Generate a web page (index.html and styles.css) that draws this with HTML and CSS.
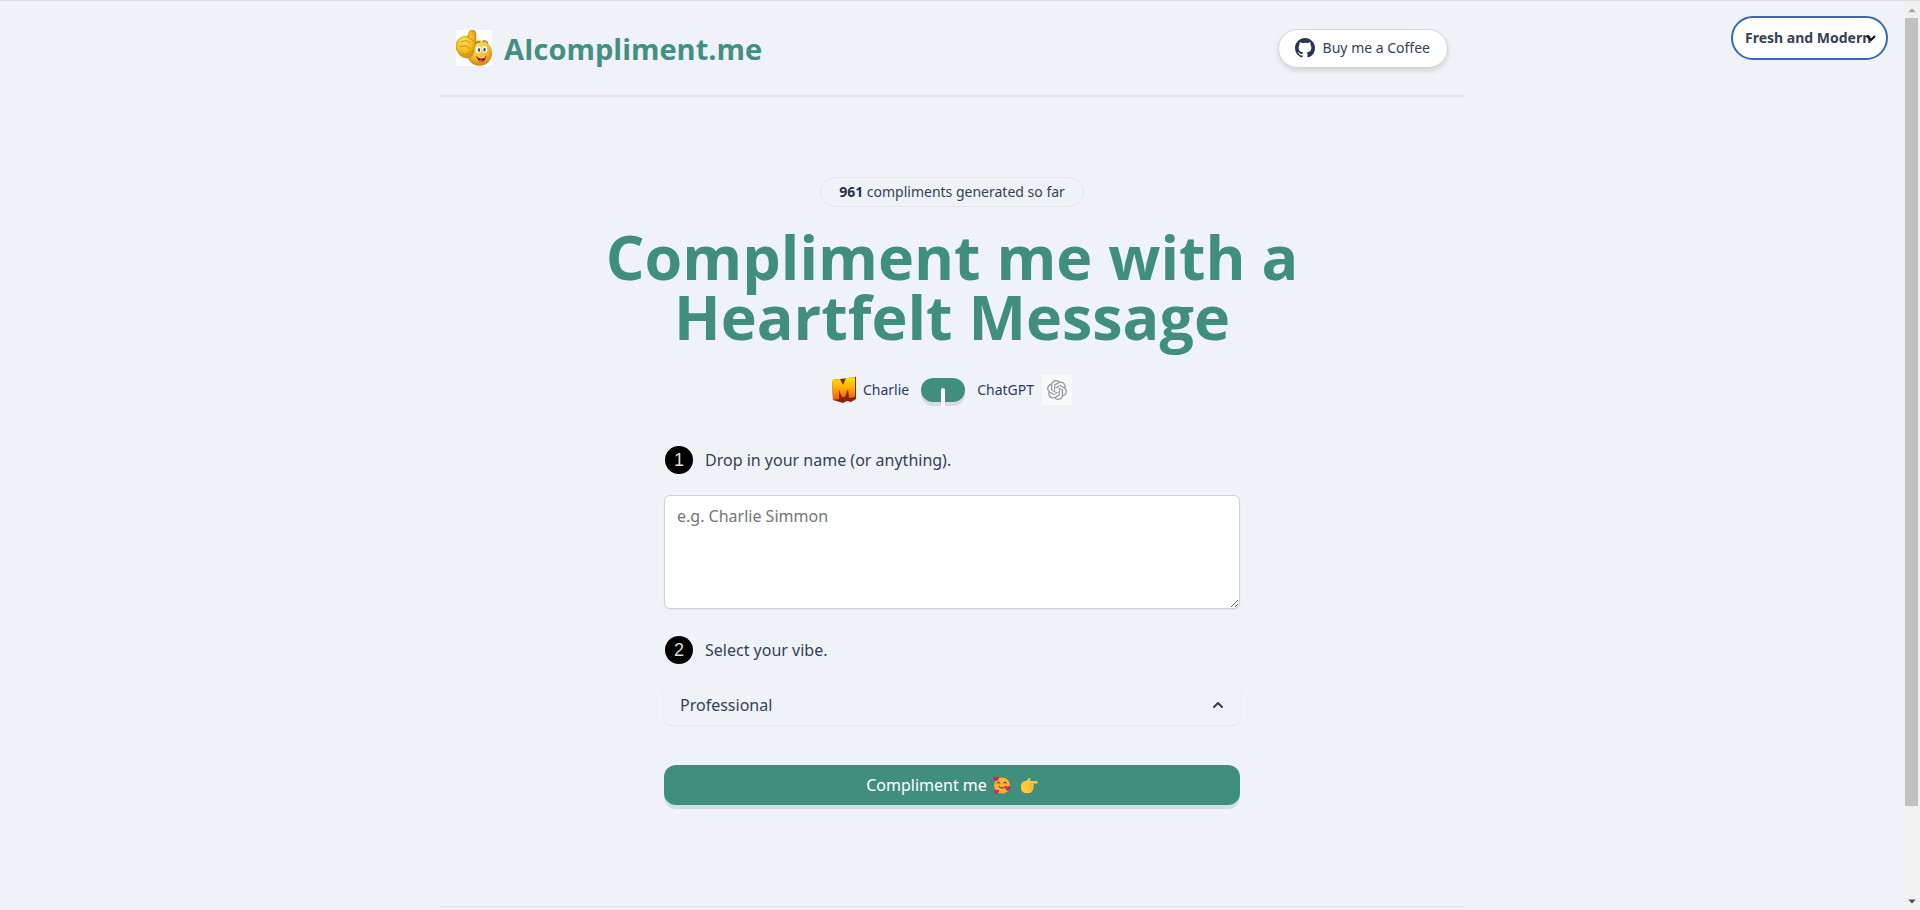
FILE: index.html
```html
<!DOCTYPE html>
<html lang="en">
<head>
<meta charset="utf-8">
<meta name="viewport" content="width=device-width, initial-scale=1">
<title>AIcompliment.me</title>
<link rel="stylesheet" href="styles.css">
</head>
<body>
<div class="page">
  <div class="theme">
    <select class="theme-select" aria-label="Theme"><option>Fresh and Modern</option><option>Dark</option></select>
    <svg class="theme-chevron" viewBox="0 0 10 8" aria-hidden="true"><path d="M1 2l4 4 4-4" fill="none" stroke="#111" stroke-width="2"/></svg>
  </div>
  <div class="container">
    <header class="header">
      <a class="brand" href="#">
        <svg class="brand-logo" viewBox="0 0 36 36" aria-hidden="true">
          <defs>
            <radialGradient id="face" cx=".45" cy=".3" r=".75"><stop offset="0" stop-color="#ffe36a"/><stop offset=".55" stop-color="#f6b92c"/><stop offset="1" stop-color="#c8741a"/></radialGradient>
            <radialGradient id="hand" cx=".4" cy=".35" r=".7"><stop offset="0" stop-color="#ffe04d"/><stop offset=".6" stop-color="#f5bd1d"/><stop offset="1" stop-color="#c58a12"/></radialGradient>
          </defs>
          <rect width="36" height="36" fill="#fff"/>
          <circle cx="23.500" cy="23" r="12.700" fill="url(#face)"/>
          <path d="M12 8Q12 0 16 0q4 0 4 4v7q-1 5-2 8 0 8-7 9-5 0-8-4-3-4-3-8 0-6 6-9 3-1 6-1z" fill="url(#hand)" stroke="#b98216" stroke-width=".6"/>
          <path d="M5 12q6-3 9 1M4 17q7-3 10 2M6 24q6 2 8-3M13 8q3 1 5 4" fill="none" stroke="#c58b16" stroke-width=".9"/>
          <ellipse cx="22.500" cy="19.500" rx="2.600" ry="3.600" fill="#fff"/><ellipse cx="28.800" cy="19.200" rx="2.400" ry="3.400" fill="#fff"/>
          <ellipse cx="23" cy="20" rx="1.200" ry="1.900" fill="#245c83"/><ellipse cx="28.500" cy="19.700" rx="1.200" ry="1.900" fill="#245c83"/>
          <path d="M19 14q2-3 5-2M27 11q3-1 5 2" fill="none" stroke="#7c4515"/>
          <path d="M20 26q5 3 10 0-1 6-5 6-3-1-5-6z" fill="#7b1712"/><path d="M23 30q2-1 4 0l-1 2h-2z" fill="#ed4a37"/><path d="M21 26.600q4 2 8 0v1q-4 2-7 0z" fill="#fff"/>
        </svg>
        <span class="brand-name">AIcompliment.me</span>
      </a>
      <a class="coffee" href="#">
        <svg class="coffee-icon" viewBox="0 0 24 24" fill="currentColor" aria-hidden="true"><path d="M12 2C6.477 2 2 6.484 2 12.017c0 4.425 2.865 8.180 6.839 9.504.5.092.682-.217.682-.483 0-.237-.008-.868-.013-1.703-2.782.605-3.369-1.343-3.369-1.343-.454-1.158-1.110-1.466-1.110-1.466-.908-.620.069-.608.069-.608 1.003.070 1.531 1.032 1.531 1.032.892 1.530 2.341 1.088 2.910.832.092-.647.350-1.088.636-1.338-2.220-.253-4.555-1.113-4.555-4.951 0-1.093.390-1.988 1.029-2.688-.103-.253-.446-1.272.098-2.650 0 0 .840-.270 2.750 1.026A9.564 9.564 0 0112 6.844c.850.004 1.705.115 2.504.337 1.909-1.296 2.747-1.027 2.747-1.027.546 1.379.202 2.398.100 2.651.640.700 1.028 1.595 1.028 2.688 0 3.848-2.339 4.695-4.566 4.943.359.309.678.920.678 1.855 0 1.338-.012 2.419-.012 2.747 0 .268.180.580.688.482A10.019 10.019 0 0022 12.017C22 6.484 17.522 2 12 2z"/></svg>
        <span>Buy me a Coffee</span>
      </a>
    </header>
    <main class="hero">
      <p class="badge"><strong>961</strong> compliments generated so far</p>
      <h1 class="title">Compliment me with a Heartfelt Message</h1>
      <div class="models">
        <svg class="charlie-logo" viewBox="0 0 24 26" aria-hidden="true">
          <defs><linearGradient id="flame" x2="0" y2="1"><stop offset="0" stop-color="#ffe50a"/><stop offset=".45" stop-color="#ffb00a"/><stop offset="1" stop-color="#f2560c"/></linearGradient></defs>
          <path d="M0 3L24 0v22l-5 3-4-1-4 2-10-3z" fill="#8d2013"/>
          <path d="M0 3l8-1 3 6 3-7 9-1v20l-6 1-1-9-3 8h-3l-3-7v9l-6 1z" fill="url(#flame)"/>
        </svg>
        <label class="model-name" for="model">Charlie</label>
        <input class="switch" type="checkbox" role="switch" id="model">
        <label class="model-name model-right" for="model">ChatGPT</label>
        <span class="gpt-tile"><svg class="gpt-logo" viewBox="0 0 24 24" fill="#999" aria-hidden="true"><path d="M22.282 9.821a5.985 5.985 0 0 0-.516-4.911 6.046 6.046 0 0 0-6.510-2.900A6.065 6.065 0 0 0 4.981 4.182a5.985 5.985 0 0 0-3.998 2.900 6.046 6.046 0 0 0 .743 7.097 5.980 5.980 0 0 0 .511 4.911 6.051 6.051 0 0 0 6.515 2.900A5.985 5.985 0 0 0 13.260 24a6.056 6.056 0 0 0 5.772-4.206 5.990 5.990 0 0 0 3.998-2.900 6.056 6.056 0 0 0-.748-7.073zM13.260 22.430a4.476 4.476 0 0 1-2.876-1.041l.141-.080 4.779-2.758a.795.795 0 0 0 .392-.681v-6.737l2.020 1.169a.071.071 0 0 1 .038.052v5.583a4.504 4.504 0 0 1-4.494 4.493zM3.600 18.304a4.471 4.471 0 0 1-.535-3.014l.142.085 4.783 2.758a.771.771 0 0 0 .780 0l5.843-3.368v2.332a.080.080 0 0 1-.033.062L9.740 19.950a4.500 4.500 0 0 1-6.140-1.646zM2.340 7.896a4.485 4.485 0 0 1 2.366-1.973v5.678a.766.766 0 0 0 .388.676l5.815 3.355-2.020 1.168a.076.076 0 0 1-.071 0l-4.830-2.786A4.504 4.504 0 0 1 2.340 7.896zm16.597 3.855l-5.833-3.387L15.119 7.200a.076.076 0 0 1 .071 0l4.830 2.791a4.494 4.494 0 0 1-.676 8.105v-5.678a.790.790 0 0 0-.407-.667zm2.010-3.023l-.141-.085-4.774-2.782a.776.776 0 0 0-.785 0L9.409 9.230V6.897a.066.066 0 0 1 .028-.061l4.830-2.787a4.500 4.500 0 0 1 6.680 4.660zm-12.640 4.135l-2.020-1.164a.080.080 0 0 1-.038-.057V6.075a4.500 4.500 0 0 1 7.375-3.453l-.142.080L8.704 5.460a.795.795 0 0 0-.393.681zm1.097-2.365l2.602-1.500 2.607 1.500v2.999l-2.597 1.500-2.607-1.500z"/></svg></span>
      </div>
      <form class="form">
        <label class="step" for="name"><span class="step-number">1</span>Drop in your name (or anything).</label>
        <textarea class="name-box" id="name" placeholder="e.g. Charlie Simmon"></textarea>
        <label class="step step-second" for="vibe"><span class="step-number">2</span>Select your vibe.</label>
        <button class="vibe" id="vibe" type="button" aria-haspopup="listbox">
          <span>Professional</span>
          <svg class="vibe-chevron" viewBox="0 0 20 20" fill="currentColor" aria-hidden="true"><path d="M14.707 12.707a1 1 0 01-1.414 0L10 9.414l-3.293 3.293a1 1 0 01-1.414-1.414l4-4a1 1 0 011.414 0l4 4a1 1 0 010 1.414z"/></svg>
        </button>
        <button class="submit" type="button">
          <span>Compliment me</span>
          <svg class="emoji" viewBox="0 0 18 18" aria-hidden="true">
            <circle cx="9" cy="9.500" r="8" fill="#ffb02e"/>
            <path d="M4 7q1.500-2 3 0M10.500 7q1.500-2 3 0M6 10.500q3 3.500 6 0" fill="none" stroke="#402a32" stroke-linecap="round"/>
            <path d="M3 5.500Q-1 3 .500 1 2-.200 3 1.500 4-.200 5.500 1 7 3 3 5.500zM14.800 15q-4-2.500-2.500-4.500 1.500-1.200 2.500.500 1-1.700 2.500-.500Q19 12.500 14.800 15zM3.500 18Q0 15.500 1.200 14q1.300-1 2.300.500 1-1.500 2.300-.500Q7 15.500 3.500 18z" fill="#d51f74"/>
          </svg>
          <svg class="emoji emoji-hand" viewBox="0 0 18 18" aria-hidden="true"><path d="M1 9q1-4 5-4l3-3q2-.500 1.500 1.500L9.500 5H17q1.500 1.200 0 2.500h-4q1.500 1 .300 2.500 1 1.200-.300 2.500.500 1.500-1 2.500-.500 2-2.500 2H5q-4-1-4-5z" fill="#ffc83d"/><path d="M9 8h4M9 10.500h4M9 13h4" stroke="#e39d18" stroke-width=".7"/></svg>
        </button>
      </form>
    </main>
    <footer class="footer"></footer>
  </div>
</div>
<div class="scrollbar" aria-hidden="true">
  <svg class="scroll-arrow" viewBox="0 0 16 18"><path d="M4 12h8L8 8z" fill="#a3a3a3"/></svg>
  <div class="scroll-track"><div class="scroll-thumb"></div></div>
  <svg class="scroll-arrow" viewBox="0 0 16 18"><path d="M4 7h8l-4 4z" fill="#505050"/></svg>
</div>
</body>
</html>
```

FILE: styles.css
```css
* {
  box-sizing: border-box;
}

body {
  margin: 0;
  min-height: 100vh;
  display: flex;
  background: #eff3f8;
  border-top: 1px solid #dadee1;
  color: #334155;
  font-family: "Noto Sans", "Open Sans", sans-serif;
  font-size: 16px;
  line-height: 24px;
}

button, select, textarea {
  font: inherit;
  color: inherit;
}

.page {
  position: relative;
  flex: 1;
}

.container {
  max-width: 1024px;
  margin: 0 auto;
}

.theme {
  position: absolute;
  top: 15px;
  right: 16px;
}

.theme-select {
  display: block;
  appearance: none;
  width: 157px;
  height: 44px;
  padding: 0 0 0 12px;
  border: 2px solid #3767bd;
  border-radius: 22px;
  background: #fff;
  color: #374151;
  font-size: 14px;
  font-weight: 700;
}

.theme-chevron {
  position: absolute;
  top: 18px;
  right: 12px;
  width: 10px;
  height: 8px;
}

.header {
  display: flex;
  align-items: center;
  justify-content: space-between;
  padding: 27px 16px;
  border-bottom: 2px solid #e2e6eb;
}

.brand {
  display: flex;
  align-items: center;
  gap: 12px;
  color: #438f80;
  text-decoration: none;
}

.brand-logo {
  width: 36px;
  height: 36px;
}

.brand-name {
  padding-top: 2px;
  font-family: "Open Sans", "Noto Sans", sans-serif;
  font-size: 29px;
  font-weight: 700;
  line-height: 38px;
}

.coffee {
  display: flex;
  align-items: center;
  gap: 6px;
  padding: 6px 17px 7px 14px;
  border: 1px solid #d1d5db;
  border-radius: 20px;
  background: #fff;
  box-shadow: 0 3px 5px rgba(0, 0, 0, 0.12);
  color: #334155;
  font-size: 14px;
  text-decoration: none;
}

.coffee-icon {
  width: 24px;
  height: 24px;
  color: #2b3552;
}

.hero {
  display: flex;
  flex-direction: column;
  align-items: center;
  padding: 80px 16px 101px;
}

.badge {
  margin: 0 0 20px;
  padding: 2px 18px;
  border: 1px solid #e3e7ec;
  border-radius: 15px;
  font-size: 14px;
}

.badge strong {
  color: #27344a;
}

.title {
  max-width: 708px;
  margin: 0 0 28px;
  color: #3f8f7c;
  font-family: "Open Sans", "Noto Sans", sans-serif;
  font-size: 61px;
  font-weight: 700;
  line-height: 60px;
  text-align: center;
}

.models {
  display: flex;
  align-items: center;
  margin-bottom: 41px;
}

.charlie-logo {
  width: 24px;
  height: 26px;
  margin-right: 7px;
}

.model-name {
  color: #2c3a60;
  font-size: 14px;
}

.model-right {
  margin-right: 8px;
}

.switch {
  appearance: none;
  display: flex;
  justify-content: center;
  width: 44px;
  height: 24px;
  margin: 0 12px;
  padding-top: 10px;
  border-radius: 12px;
  background: #3f8f7c;
  box-shadow: 0 4px 0 #d5dddf;
}

.switch::before {
  content: "";
  width: 4px;
  height: 20px;
  border-radius: 2px;
  background: #fff;
}

.gpt-tile {
  display: flex;
  align-items: center;
  justify-content: center;
  width: 30px;
  height: 30px;
  background: #f8f9fb;
}

.gpt-logo {
  width: 20px;
  height: 20px;
}

.form {
  display: flex;
  flex-direction: column;
  width: 100%;
  max-width: 576px;
}

.step {
  display: flex;
  align-items: center;
  gap: 12px;
  margin-left: 1px;
}

.step-second {
  margin-top: 27px;
}

.step-number {
  display: flex;
  align-items: center;
  justify-content: center;
  width: 28px;
  height: 28px;
  border-radius: 50%;
  background: #000;
  color: #ddd;
  font-family: "Liberation Sans", sans-serif;
  font-size: 18px;
}

.name-box {
  height: 114px;
  margin-top: 21px;
  padding: 8px 12px;
  border: 1px solid #cdd3db;
  border-radius: 6px;
  background: #fff;
  box-shadow: 0 1px 2px rgba(0, 0, 0, 0.05);
  resize: vertical;
}

.name-box::placeholder {
  color: #757575;
}

.vibe {
  display: flex;
  align-items: center;
  justify-content: space-between;
  margin-top: 21px;
  padding: 8px 12px 8px 16px;
  border: 0;
  border-radius: 6px;
  background: #eff3f8;
  box-shadow: 0 1px 2px rgba(0, 0, 0, 0.06);
}

.vibe-chevron {
  width: 20px;
  height: 20px;
}

.submit {
  display: flex;
  align-items: center;
  justify-content: center;
  margin-top: 40px;
  padding: 8px 16px;
  border: 0;
  border-radius: 12px;
  background: #3f8f7c;
  box-shadow: 0 4px 0 #d5dddf;
  color: #fff;
}

.emoji {
  width: 18px;
  height: 18px;
  margin-left: 6px;
}

.emoji-hand {
  margin-left: 9px;
}

.footer {
  border-top: 1px solid #dfe3ea;
}

.scrollbar {
  display: flex;
  flex-direction: column;
  width: 16px;
  background: #f1f1f1;
}

.scroll-arrow {
  width: 16px;
  height: 17px;
}

.scroll-track {
  flex: 1;
}

.scroll-thumb {
  width: 13px;
  height: 90%;
  margin-left: 1px;
  background: #c1c1c1;
}
```
